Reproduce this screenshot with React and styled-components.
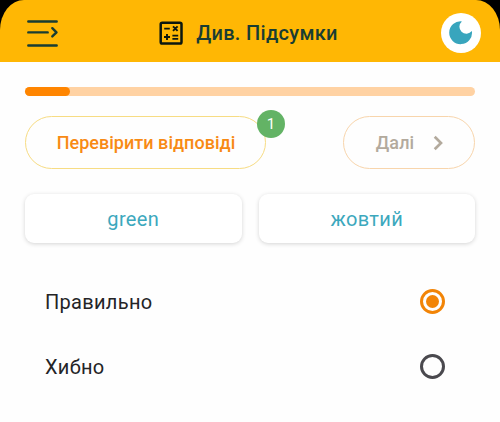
import React from 'react';
import styled, { createGlobalStyle } from 'styled-components';

const GlobalStyle = createGlobalStyle`
  * { box-sizing: border-box; }
  body { margin: 0; background: #fff; font-family: Roboto, "Noto Sans", sans-serif; }
  button { font-family: inherit; margin: 0; padding: 0; background: none; border: 0; }
`;

const Screen = styled.div`
  width: 500px;
  height: 422px;
  background: #fefefe;
  overflow: hidden;
`;

const HeaderBackdrop = styled.div`
  background: #000;
`;

const Header = styled.header`
  display: flex;
  align-items: center;
  justify-content: space-between;
  height: 62px;
  padding: 4px 19px 0 26px;
  background: #ffb704;
  border-radius: 24px 24px 0 0 / 30px 30px 0 0;
`;

const IconButton = styled.button`
  display: flex;
`;

const Title = styled.h1`
  display: flex;
  align-items: center;
  gap: 13px;
  margin: 0;
  padding-right: 4px;
  font-size: 20px;
  font-weight: 500;
  line-height: 24px;
  letter-spacing: ${(p) => p.$tracking};
  color: #183d33;
  white-space: nowrap;
`;

const ThemeButton = styled.button`
  display: flex;
  align-items: center;
  justify-content: center;
  width: 40px;
  height: 40px;
  border-radius: 50%;
  background: #fff;
`;

const Content = styled.main`
  padding: 25px 25px 0;
`;

const ProgressTrack = styled.div`
  height: 9px;
  border-radius: 5px;
  background: #ffd2a3;
`;

const ProgressFill = styled.div`
  width: 10%;
  height: 100%;
  border-radius: 5px;
  background: #ff8500;
`;

const Actions = styled.div`
  display: flex;
  justify-content: space-between;
  margin-top: 20px;
`;

const PillButton = styled.button`
  position: relative;
  display: flex;
  align-items: center;
  justify-content: center;
  gap: 19px;
  width: ${(p) => p.$width};
  height: 53px;
  padding-left: 1px;
  border: 1.5px solid ${(p) => p.$border};
  border-radius: 27px;
  font-size: 18px;
  font-weight: 500;
  letter-spacing: ${(p) => p.$tracking};
  color: ${(p) => p.$color};
  white-space: nowrap;
`;

const Badge = styled.span`
  position: absolute;
  top: -7px;
  right: -20px;
  width: 28px;
  height: 28px;
  border-radius: 50%;
  background: #63b365;
  color: #fff;
  font-size: 15px;
  font-weight: 400;
  line-height: 28px;
  letter-spacing: 0;
  text-align: center;
`;

const Cards = styled.div`
  display: grid;
  grid-template-columns: 1fr 1fr;
  gap: 17px;
  margin-top: 25px;
`;

const Card = styled.div`
  display: flex;
  align-items: center;
  justify-content: center;
  height: 49px;
  border-radius: 9px;
  background: #fff;
  box-shadow: 0 1px 4px rgba(0, 0, 0, 0.17);
  font-size: 20px;
  letter-spacing: ${(p) => p.$tracking};
  color: #3ca8bd;
`;

const Options = styled.div`
  margin-top: 26px;
  padding: 0 30px 0 20px;
`;

const Option = styled.label`
  display: flex;
  align-items: center;
  justify-content: space-between;
  height: 65px;
  font-size: 20px;
  letter-spacing: ${(p) => p.$tracking};
  color: #242426;
`;

const Radio = styled.span`
  display: flex;
  align-items: center;
  justify-content: center;
  width: 25px;
  height: 25px;
  border: 3px solid ${(p) => (p.$checked ? '#f28406' : '#4a494e')};
  border-radius: 50%;

  &::after {
    content: '';
    width: 13px;
    height: 13px;
    border-radius: 50%;
    background: ${(p) => (p.$checked ? '#f28406' : 'transparent')};
  }
`;

const MenuIcon = () => (
  <svg width="34" height="30" viewBox="0 0 34 30" fill="none" stroke="#183d33" strokeWidth="2.4" strokeLinecap="round" strokeLinejoin="round">
    <path d="M2.3 3.5H30.7M2.3 14.4H21.7M2.3 27.5H30.7" />
    <path d="M26.3 10.2L30.5 14.3L26.3 18.4" />
  </svg>
);

const CalculatorIcon = () => (
  <svg width="24" height="24" viewBox="0 0 24 24" fill="none" stroke="#0c1710">
    <rect x="1.7" y="1.7" width="20.8" height="20.8" rx="1.6" strokeWidth="2.5" />
    <path d="M5.2 7.6H10.8M8 13V19M5 16H11M13.4 14.6H19.2M13.4 17.9H19.2M14 5.3L18.6 9.9M18.6 5.3L14 9.9" strokeWidth="1.9" />
  </svg>
);

const MoonIcon = () => (
  <svg width="24" height="24" viewBox="0 0 24 24">
    <path d="M12.9 0.4A11.4 11.4 0 1 0 22.9 10.1A7 7 0 1 1 12.9 0.4Z" fill="#38a5bd" />
  </svg>
);

const ChevronIcon = () => (
  <svg width="10" height="16" viewBox="0 0 10 16" fill="none" stroke="#b3aa9d" strokeWidth="2.7">
    <path d="M1.7 1.7L8 8L1.7 14.3" />
  </svg>
);

export default function App() {
  return (
    <>
      <GlobalStyle />
      <Screen>
        <HeaderBackdrop>
          <Header>
            <IconButton aria-label="Меню"><MenuIcon /></IconButton>
            <Title $tracking="0.3px"><CalculatorIcon />Див. Підсумки</Title>
            <ThemeButton aria-label="Тема"><MoonIcon /></ThemeButton>
          </Header>
        </HeaderBackdrop>
        <Content>
          <ProgressTrack><ProgressFill /></ProgressTrack>
          <Actions>
            <PillButton $width="241px" $border="#f7dc83" $color="#f88a14" $tracking="0.03px">
              Перевірити відповіді
              <Badge>1</Badge>
            </PillButton>
            <PillButton $width="132px" $border="#f8d5ac" $color="#b3aa9d" $tracking="0.1px">
              Далі
              <ChevronIcon />
            </PillButton>
          </Actions>
          <Cards>
            <Card $tracking="0.35px">green</Card>
            <Card $tracking="0.35px">жовтий</Card>
          </Cards>
          <Options>
            <Option $tracking="0.3px">Правильно<Radio $checked /></Option>
            <Option $tracking="0.3px">Хибно<Radio /></Option>
          </Options>
        </Content>
      </Screen>
    </>
  );
}
